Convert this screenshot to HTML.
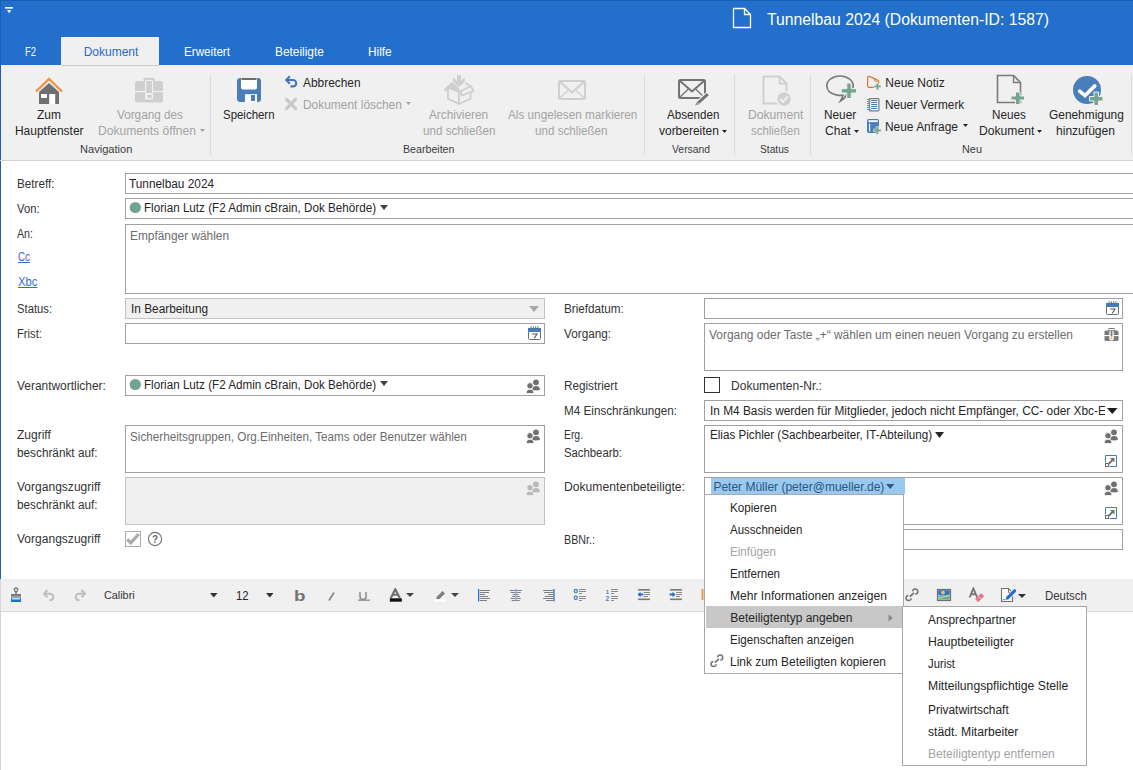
<!DOCTYPE html>
<html><head><meta charset="utf-8">
<style>
html,body{margin:0;padding:0;width:1133px;height:770px;overflow:hidden;background:#fff}
body{position:relative;font-family:"Liberation Sans",sans-serif}
.r{position:absolute;display:block}
.t{position:absolute;white-space:nowrap;transform-origin:0 0;font-family:"Liberation Sans",sans-serif}
</style></head><body>
<div class="r" style="left:0px;top:0px;width:1133px;height:65px;background:#226fcc"></div>
<div class="r" style="left:0px;top:0px;width:1133px;height:1px;background:#1b5fb5"></div>
<div class="r" style="left:0px;top:0px;width:1px;height:65px;background:#1b5fb5"></div>
<svg class="r" style="left:4px;top:6px" width="10" height="9" viewBox="0 0 10 9"><rect x="1" y="1" width="8" height="1.6" fill="#fff"/><path d="M3 4 H7.2 L5.1 7.3 Z" fill="#fff"/></svg>
<svg class="r" style="left:731px;top:7px" width="22" height="22" viewBox="0 0 22 22"><path d="M2.5 1.5 H13.5 L19.5 7.5 V20.5 H2.5 Z" fill="none" stroke="#fff" stroke-width="1.3"/><path d="M13.5 1.5 V7.5 H19.5" fill="none" stroke="#fff" stroke-width="1.3"/></svg>
<span class="t" style="left:767.00px;top:11.96px;font-size:16px;line-height:16px;color:#ffffff;transform:scaleX(0.9834);">Tunnelbau 2024 (Dokumenten-ID: 1587)</span>
<div class="r" style="left:61px;top:37px;width:98px;height:28px;background:#f0f0f0"></div>
<span class="t" style="left:25.00px;top:46.34px;font-size:12px;line-height:12px;color:#ffffff;transform:scaleX(0.7857);">F2</span>
<span class="t" style="left:83.70px;top:46.34px;font-size:12px;line-height:12px;color:#2a6ac4;">Dokument</span>
<span class="t" style="left:183.60px;top:46.34px;font-size:12px;line-height:12px;color:#ffffff;transform:scaleX(0.9714);">Erweitert</span>
<span class="t" style="left:274.70px;top:46.34px;font-size:12px;line-height:12px;color:#ffffff;transform:scaleX(0.9899);">Beteiligte</span>
<span class="t" style="left:368.20px;top:46.34px;font-size:12px;line-height:12px;color:#ffffff;transform:scaleX(0.9875);">Hilfe</span>
<div class="r" style="left:0px;top:65px;width:1133px;height:95px;background:#f0f0f0"></div>
<div class="r" style="left:0px;top:65px;width:1px;height:96px;background:#1b5fb5"></div>
<div class="r" style="left:0px;top:160px;width:1133px;height:1px;background:#d4d4d4"></div>
<div class="r" style="left:61px;top:65px;width:98px;height:1px;background:#cdcdcd"></div>
<div class="r" style="left:210px;top:74px;width:1px;height:81px;background:#dcdcdc"></div>
<div class="r" style="left:644px;top:74px;width:1px;height:81px;background:#dcdcdc"></div>
<div class="r" style="left:734px;top:74px;width:1px;height:81px;background:#dcdcdc"></div>
<div class="r" style="left:810px;top:74px;width:1px;height:81px;background:#dcdcdc"></div>
<div class="r" style="left:1131px;top:74px;width:1px;height:81px;background:#dcdcdc"></div>
<span class="t" style="left:36.80px;top:108.84px;font-size:12px;line-height:12px;color:#262626;transform:scaleX(0.9958);">Zum</span>
<span class="t" style="left:14.90px;top:124.84px;font-size:12px;line-height:12px;color:#262626;">Hauptfenster</span>
<span class="t" style="left:116.50px;top:108.84px;font-size:12px;line-height:12px;color:#a3a3a3;transform:scaleX(0.9778);">Vorgang des</span>
<span class="t" style="left:97.70px;top:124.84px;font-size:12px;line-height:12px;color:#a3a3a3;transform:scaleX(1.0077);">Dokuments öffnen</span>
<span class="t" style="left:79.60px;top:143.69px;font-size:11px;line-height:11px;color:#3c3c3c;transform:scaleX(1.0077);">Navigation</span>
<span class="t" style="left:223.00px;top:108.84px;font-size:12px;line-height:12px;color:#262626;transform:scaleX(0.9537);">Speichern</span>
<span class="t" style="left:303.00px;top:76.84px;font-size:12px;line-height:12px;color:#262626;transform:scaleX(0.9914);">Abbrechen</span>
<span class="t" style="left:303.00px;top:98.84px;font-size:12px;line-height:12px;color:#a3a3a3;transform:scaleX(0.9950);">Dokument löschen</span>
<span class="t" style="left:429.00px;top:108.84px;font-size:12px;line-height:12px;color:#a3a3a3;transform:scaleX(0.9833);">Archivieren</span>
<span class="t" style="left:422.70px;top:124.84px;font-size:12px;line-height:12px;color:#a3a3a3;transform:scaleX(0.9699);">und schließen</span>
<span class="t" style="left:507.50px;top:108.84px;font-size:12px;line-height:12px;color:#a3a3a3;transform:scaleX(0.9788);">Als ungelesen markieren</span>
<span class="t" style="left:535.40px;top:124.84px;font-size:12px;line-height:12px;color:#a3a3a3;transform:scaleX(0.9712);">und schließen</span>
<span class="t" style="left:403.00px;top:143.69px;font-size:11px;line-height:11px;color:#3c3c3c;transform:scaleX(0.9671);">Bearbeiten</span>
<span class="t" style="left:666.50px;top:108.84px;font-size:12px;line-height:12px;color:#262626;transform:scaleX(0.9685);">Absenden</span>
<span class="t" style="left:659.00px;top:124.84px;font-size:12px;line-height:12px;color:#262626;transform:scaleX(0.9967);">vorbereiten</span>
<span class="t" style="left:672.00px;top:143.69px;font-size:11px;line-height:11px;color:#3c3c3c;transform:scaleX(0.9441);">Versand</span>
<span class="t" style="left:747.60px;top:108.84px;font-size:12px;line-height:12px;color:#a3a3a3;transform:scaleX(1.0119);">Dokument</span>
<span class="t" style="left:750.60px;top:124.84px;font-size:12px;line-height:12px;color:#a3a3a3;transform:scaleX(0.9502);">schließen</span>
<span class="t" style="left:759.70px;top:143.69px;font-size:11px;line-height:11px;color:#3c3c3c;transform:scaleX(0.9280);">Status</span>
<span class="t" style="left:824.30px;top:108.84px;font-size:12px;line-height:12px;color:#262626;transform:scaleX(0.9832);">Neuer</span>
<span class="t" style="left:825.40px;top:124.84px;font-size:12px;line-height:12px;color:#262626;transform:scaleX(1.0059);">Chat</span>
<span class="t" style="left:885.30px;top:77.34px;font-size:12px;line-height:12px;color:#262626;">Neue Notiz</span>
<span class="t" style="left:885.30px;top:98.84px;font-size:12px;line-height:12px;color:#262626;transform:scaleX(0.9815);">Neuer Vermerk</span>
<span class="t" style="left:885.30px;top:120.84px;font-size:12px;line-height:12px;color:#262626;transform:scaleX(0.9932);">Neue Anfrage</span>
<span class="t" style="left:992.00px;top:108.84px;font-size:12px;line-height:12px;color:#262626;transform:scaleX(0.9727);">Neues</span>
<span class="t" style="left:978.60px;top:124.84px;font-size:12px;line-height:12px;color:#262626;transform:scaleX(1.0119);">Dokument</span>
<span class="t" style="left:1049.00px;top:108.84px;font-size:12px;line-height:12px;color:#262626;transform:scaleX(0.9921);">Genehmigung</span>
<span class="t" style="left:1056.40px;top:124.84px;font-size:12px;line-height:12px;color:#262626;transform:scaleX(1.0043);">hinzufügen</span>
<span class="t" style="left:962.40px;top:143.69px;font-size:11px;line-height:11px;color:#3c3c3c;transform:scaleX(0.9877);">Neu</span>
<svg class="r" style="left:200px;top:129px" width="5" height="3" viewBox="0 0 5 3"><path d="M0 0 H5 L2.5 3 Z" fill="#a3a3a3"/></svg>
<svg class="r" style="left:406px;top:102px" width="5" height="3" viewBox="0 0 5 3"><path d="M0 0 H5 L2.5 3 Z" fill="#a3a3a3"/></svg>
<svg class="r" style="left:722px;top:130px" width="5" height="3" viewBox="0 0 5 3"><path d="M0 0 H5 L2.5 3 Z" fill="#262626"/></svg>
<svg class="r" style="left:853.5px;top:130px" width="5" height="3" viewBox="0 0 5 3"><path d="M0 0 H5 L2.5 3 Z" fill="#262626"/></svg>
<svg class="r" style="left:963px;top:124px" width="5" height="3" viewBox="0 0 5 3"><path d="M0 0 H5 L2.5 3 Z" fill="#262626"/></svg>
<svg class="r" style="left:1037px;top:130px" width="5" height="3" viewBox="0 0 5 3"><path d="M0 0 H5 L2.5 3 Z" fill="#262626"/></svg>
<svg class="r" style="left:34px;top:77px" width="30" height="28" viewBox="0 0 30 28"><path d="M5 15 V27 H25 V15 L15 6 Z" fill="#6f6f6f"/><rect x="7" y="17" width="6" height="4" fill="#fff"/><rect x="15.2" y="17" width="6" height="10" fill="#fff"/><path d="M2 14.5 L15 2 L28 14.5" fill="none" stroke="#ee9544" stroke-width="2.4"/></svg>
<svg class="r" style="left:134px;top:77px" width="30" height="27" viewBox="0 0 30 27"><rect x="1" y="4" width="28" height="21.5" rx="2.5" fill="#cfcfcf"/><rect x="1" y="14" width="28" height="1.2" fill="#f0f0f0"/><rect x="9.3" y="0.8" width="11.6" height="3.2" rx="1.5" fill="#cfcfcf"/><rect x="11" y="3" width="8.1" height="19.6" rx="1.5" fill="#f0f0f0"/><rect x="12.3" y="4" width="5.6" height="12" fill="#cfcfcf"/><rect x="13.3" y="18" width="4.6" height="3" fill="#cfcfcf"/></svg>
<svg class="r" style="left:236px;top:77px" width="26" height="26" viewBox="0 0 26 26"><path d="M3.5 1 H22 A3 3 0 0 1 25 4 V22 A3 3 0 0 1 22 25 H3.5 A3 3 0 0 1 1 22 V4 A3 3 0 0 1 3.5 1 Z" fill="#4a7ebb"/><path d="M5 1 H21 V10.5 A2 2 0 0 1 19 12.5 H7 A2 2 0 0 1 5 10.5 Z" fill="#fff"/><rect x="5.5" y="1" width="15" height="2" fill="#6e6e6e"/><rect x="9" y="17.2" width="12" height="8" fill="#fff"/><rect x="15" y="18" width="4" height="6" fill="#4a7ebb"/></svg>
<svg class="r" style="left:284px;top:74px" width="15" height="15" viewBox="0 0 15 15"><path d="M2.5 6 H9 A3.2 3.2 0 0 1 9 12.4 H6.5" fill="none" stroke="#3b78c3" stroke-width="2.1"/><path d="M5.8 2.2 L2.2 6 L5.8 9.8" fill="none" stroke="#3b78c3" stroke-width="2.1"/></svg>
<svg class="r" style="left:284px;top:97px" width="14" height="14" viewBox="0 0 14 14"><path d="M2.5 2.5 L11.5 11.5 M11.5 2.5 L2.5 11.5" stroke="#c9c9c9" stroke-width="3.3" stroke-linecap="round"/></svg>
<svg class="r" style="left:440px;top:72px" width="38" height="36" viewBox="0 0 38 36"><path d="M17 3 H21 V9 L24.8 5 V9.5 L18.9 15.2 L13 9.5 V5 L17 9 Z" fill="#cfcfcf"/><path d="M4.6 18.6 L11.9 11.3 L18.9 17.6" fill="none" stroke="#cfcfcf" stroke-width="2.4" stroke-linejoin="round"/><path d="M7.5 16 L11.9 11.5 L18.9 17.6 V19.8 Z" fill="#cfcfcf"/><path d="M7.9 15.6 V26.6 L18.9 32 L30.6 26.6 V19.8" fill="none" stroke="#cfcfcf" stroke-width="1.9" stroke-linejoin="round"/><path d="M7.9 15.6 L18.9 19.8 V32" fill="none" stroke="#cfcfcf" stroke-width="1.9"/><path d="M18.9 19.8 L30.6 14.5" fill="none" stroke="#cfcfcf" stroke-width="1.9"/><path d="M25.2 11.2 L30.8 14 L33.4 19.2 L21.7 23.4 L20.1 19.6" fill="none" stroke="#cfcfcf" stroke-width="1.9" stroke-linejoin="round"/></svg>
<svg class="r" style="left:557px;top:79px" width="30" height="22" viewBox="0 0 30 22"><rect x="2" y="2" width="26" height="18" rx="1.5" fill="none" stroke="#cfcfcf" stroke-width="2"/><path d="M2.5 2.5 L15 13.5 L27.5 2.5" fill="none" stroke="#cfcfcf" stroke-width="2"/><path d="M3 19 L11.5 11 M27 19 L18.5 11" stroke="#cfcfcf" stroke-width="1.2"/></svg>
<svg class="r" style="left:677px;top:78px" width="34" height="28" viewBox="0 0 34 28"><rect x="2" y="2" width="26" height="18" rx="1.5" fill="none" stroke="#737373" stroke-width="2"/><path d="M2.5 2.5 L15 13.5 L27.5 2.5" fill="none" stroke="#737373" stroke-width="2"/><path d="M3 19 L11.5 11 M27 19 L18.5 11" stroke="#737373" stroke-width="1.2"/><path d="M31 16 L20.5 25.5" stroke="#f0f0f0" stroke-width="5.5"/><path d="M30.8 16.2 L21 25" stroke="#737373" stroke-width="3"/><path d="M19.6 24 L22 26.4 L18 27.5 Z" fill="#9a9a9a"/></svg>
<svg class="r" style="left:762px;top:75px" width="32" height="32" viewBox="0 0 32 32"><path d="M1.5 1.5 H17.5 L24.5 8.5 V28.5 H1.5 Z" fill="none" stroke="#d0d0d0" stroke-width="2"/><path d="M17.5 1.5 V8.5 H24.5" fill="none" stroke="#d0d0d0" stroke-width="1.8"/><circle cx="22" cy="24" r="7.5" fill="#d0d0d0" stroke="#f0f0f0" stroke-width="1.5"/><path d="M18.2 24 L21 26.8 L25.8 21.5" fill="none" stroke="#f0f0f0" stroke-width="2"/></svg>
<svg class="r" style="left:824px;top:74px" width="34" height="30" viewBox="0 0 34 30"><path d="M16 2 C8.5 2 2.8 6.3 2.8 11.8 C2.8 16.3 6.5 19.8 12 20.8 C14.5 21.3 17 21.5 19 21.3 C18.5 23.5 17.5 25.5 16.5 27 C19.5 25.5 21.5 23 22.5 20.8 C26.5 19.2 29.2 15.8 29.2 11.8 C29.2 6.3 23.5 2 16 2 Z" fill="none" stroke="#7a7a7a" stroke-width="1.7"/><path d="M22.8 9 H27.2 V14.7 H32.5 V19 H27.2 V24.5 H22.8 V19 H17.3 V14.7 H22.8 Z" fill="#72a68e" stroke="#f0f0f0" stroke-width="1"/></svg>
<svg class="r" style="left:865px;top:75px" width="18" height="16" viewBox="0 0 18 16"><path d="M9 12.3 H3.8 A1.2 1.2 0 0 1 2.6 11.1 V2.6 A1.4 1.4 0 0 1 4.4 1.4 L12.6 5 A1.6 1.6 0 0 1 13.6 6.5 V8" fill="none" stroke="#d4762c" stroke-width="1.2"/><path d="M8.6 3.2 L10.4 6.6 L13 5.6" fill="none" stroke="#d4762c" stroke-width="1"/><path d="M11.35 7.9 H13.65 V10.25 H16 V12.55 H13.65 V14.9 H11.35 V12.55 H9 V10.25 H11.35 Z" fill="#72a68e" stroke="#f0f0f0" stroke-width="0.5"/></svg>
<svg class="r" style="left:865px;top:97px" width="16" height="15" viewBox="0 0 16 15"><rect x="4.3" y="1.6" width="9.6" height="12.2" rx="0.8" fill="#fff" stroke="#7a7a7a" stroke-width="1.2"/><path d="M6.2 3.5 H12.2 M6.2 5.5 H12.2 M6.2 7.5 H12.2 M6.2 9.5 H12.2 M6.2 11.5 H12.2" stroke="#3b78c3" stroke-width="1"/><path d="M2 2.5 H5.5 M2 4.5 H5.5 M2 6.5 H5.5 M2 8.5 H5.5 M2 10.5 H5.5 M2 12.5 H5.5" stroke="#8a8a8a" stroke-width="1"/></svg>
<svg class="r" style="left:865px;top:118px" width="18" height="17" viewBox="0 0 18 17"><rect x="2" y="1" width="12" height="13.9" rx="1.6" fill="#4a7ebb"/><rect x="3.4" y="2.2" width="9.4" height="1.9" fill="#fbfbf5"/><rect x="4.1" y="5.5" width="1.1" height="8" fill="#fff"/><path d="M11.05 8.6 H13.55 V11.15 H16.1 V13.65 H13.55 V16.2 H11.05 V13.65 H8.5 V11.15 H11.05 Z" fill="#72a68e" stroke="#f0f0f0" stroke-width="0.6"/></svg>
<svg class="r" style="left:996px;top:74px" width="32" height="32" viewBox="0 0 32 32"><path d="M1.5 1.5 H17.5 L24.5 8.5 V28.5 H1.5 Z" fill="none" stroke="#7a7a7a" stroke-width="1.6"/><path d="M17.5 1.5 V8.5 H24.5" fill="none" stroke="#7a7a7a" stroke-width="1.4"/><path d="M19.5 18 H24 V22 H28.5 V26 H24 V30.5 H19.5 V26 H15 V22 H19.5 Z" fill="#72a68e" stroke="#f0f0f0" stroke-width="1"/></svg>
<svg class="r" style="left:1071px;top:74px" width="36" height="34" viewBox="0 0 36 34"><circle cx="16" cy="16" r="14" fill="#4a7ebb"/><path d="M8.6 17.2 L14 21.6 L23.8 11.9" fill="none" stroke="#fff" stroke-width="3.6" stroke-linecap="round"/><path d="M23 18 H27.5 V22.5 H32 V27 H27.5 V31.5 H23 V27 H18.5 V22.5 H23 Z" fill="#72a68e" stroke="#f0f0f0" stroke-width="1"/></svg>
<div class="r" style="left:0px;top:161px;width:1133px;height:418px;background:#ffffff"></div>
<div class="r" style="left:0px;top:161px;width:1px;height:418px;background:#1b5fb5"></div>
<div class="r" style="left:125px;top:173px;width:1030px;height:21px;background:#fff;border:1px solid #a0a0a0;box-sizing:border-box"></div>
<div class="r" style="left:125px;top:198px;width:1030px;height:21px;background:#fff;border:1px solid #a0a0a0;box-sizing:border-box"></div>
<div class="r" style="left:125px;top:224px;width:1030px;height:70px;background:#fff;border:1px solid #a0a0a0;box-sizing:border-box"></div>
<div class="r" style="left:125px;top:298px;width:420px;height:21px;background:#f0f0f0;border:1px solid #c2c2c2;box-sizing:border-box"></div>
<div class="r" style="left:125px;top:323px;width:420px;height:21px;background:#fff;border:1px solid #a0a0a0;box-sizing:border-box"></div>
<div class="r" style="left:125px;top:375px;width:420px;height:21px;background:#fff;border:1px solid #a0a0a0;box-sizing:border-box"></div>
<div class="r" style="left:125px;top:425px;width:420px;height:48px;background:#fff;border:1px solid #a0a0a0;box-sizing:border-box"></div>
<div class="r" style="left:125px;top:477px;width:420px;height:48px;background:#f0f0f0;border:1px solid #c2c2c2;box-sizing:border-box"></div>
<div class="r" style="left:704px;top:298px;width:419px;height:21px;background:#fff;border:1px solid #a0a0a0;box-sizing:border-box"></div>
<div class="r" style="left:704px;top:323px;width:419px;height:48px;background:#fff;border:1px solid #a0a0a0;box-sizing:border-box"></div>
<div class="r" style="left:704px;top:400px;width:419px;height:21px;background:#fff;border:1px solid #a0a0a0;box-sizing:border-box"></div>
<div class="r" style="left:704px;top:425px;width:419px;height:48px;background:#fff;border:1px solid #a0a0a0;box-sizing:border-box"></div>
<div class="r" style="left:704px;top:477px;width:419px;height:48px;background:#fff;border:1px solid #a0a0a0;box-sizing:border-box"></div>
<div class="r" style="left:704px;top:529px;width:419px;height:21px;background:#fff;border:1px solid #a0a0a0;box-sizing:border-box"></div>
<div class="r" style="left:704px;top:377px;width:16px;height:16px;border:1px solid #333;box-sizing:border-box;background:#fff"></div>
<div class="r" style="left:125px;top:531px;width:16px;height:16px;border:1px solid #adadad;box-sizing:border-box;background:#fff"></div>
<svg class="r" style="left:125px;top:531px" width="16" height="16" viewBox="0 0 16 16"><path d="M2.3 8.3 L5.8 11.8 L13.8 3" fill="none" stroke="#ababab" stroke-width="3.3"/></svg>
<svg class="r" style="left:147px;top:531px" width="16" height="16" viewBox="0 0 16 16"><circle cx="8" cy="8" r="6.6" fill="none" stroke="#707070" stroke-width="1.1"/><text x="8" y="12" font-family="Liberation Sans" font-weight="bold" font-size="10" text-anchor="middle" fill="#707070">?</text></svg>
<span class="t" style="left:17.00px;top:178.34px;font-size:12px;line-height:12px;color:#333333;transform:scaleX(0.9740);">Betreff:</span>
<span class="t" style="left:17.00px;top:202.84px;font-size:12px;line-height:12px;color:#333333;transform:scaleX(0.9375);">Von:</span>
<span class="t" style="left:17.00px;top:227.84px;font-size:12px;line-height:12px;color:#333333;transform:scaleX(0.8889);">An:</span>
<span class="t" style="left:17.00px;top:302.84px;font-size:12px;line-height:12px;color:#333333;transform:scaleX(0.9396);">Status:</span>
<span class="t" style="left:17.00px;top:327.84px;font-size:12px;line-height:12px;color:#333333;transform:scaleX(0.9346);">Frist:</span>
<span class="t" style="left:17.00px;top:380.34px;font-size:12px;line-height:12px;color:#333333;transform:scaleX(0.9944);">Verantwortlicher:</span>
<span class="t" style="left:17.00px;top:429.34px;font-size:12px;line-height:12px;color:#333333;">Zugriff</span>
<span class="t" style="left:17.00px;top:447.34px;font-size:12px;line-height:12px;color:#333333;transform:scaleX(0.9817);">beschränkt auf:</span>
<span class="t" style="left:17.00px;top:481.34px;font-size:12px;line-height:12px;color:#333333;transform:scaleX(1.0030);">Vorgangszugriff</span>
<span class="t" style="left:17.00px;top:499.34px;font-size:12px;line-height:12px;color:#333333;transform:scaleX(0.9817);">beschränkt auf:</span>
<span class="t" style="left:17.00px;top:532.84px;font-size:12px;line-height:12px;color:#333333;transform:scaleX(1.0030);">Vorgangszugriff</span>
<span class="t" style="left:564.20px;top:302.84px;font-size:12px;line-height:12px;color:#333333;transform:scaleX(0.9756);">Briefdatum:</span>
<span class="t" style="left:564.20px;top:327.84px;font-size:12px;line-height:12px;color:#333333;transform:scaleX(0.9792);">Vorgang:</span>
<span class="t" style="left:564.20px;top:380.34px;font-size:12px;line-height:12px;color:#333333;transform:scaleX(0.9772);">Registriert</span>
<span class="t" style="left:564.20px;top:404.84px;font-size:12px;line-height:12px;color:#333333;transform:scaleX(0.9741);">M4 Einschränkungen:</span>
<span class="t" style="left:564.20px;top:428.84px;font-size:12px;line-height:12px;color:#333333;transform:scaleX(0.8636);">Erg.</span>
<span class="t" style="left:564.20px;top:446.84px;font-size:12px;line-height:12px;color:#333333;transform:scaleX(0.9431);">Sachbearb:</span>
<span class="t" style="left:564.20px;top:481.34px;font-size:12px;line-height:12px;color:#333333;transform:scaleX(1.0126);">Dokumentenbeteiligte:</span>
<span class="t" style="left:564.20px;top:534.34px;font-size:12px;line-height:12px;color:#333333;transform:scaleX(0.8921);">BBNr.:</span>
<span class="t" style="left:18.00px;top:251.34px;font-size:12px;line-height:12px;color:#2f70c8;transform:scaleX(0.8136);text-decoration:underline">Cc</span>
<span class="t" style="left:18.00px;top:275.84px;font-size:12px;line-height:12px;color:#2f70c8;transform:scaleX(0.9398);text-decoration:underline">Xbc</span>
<span class="t" style="left:129.00px;top:178.34px;font-size:12px;line-height:12px;color:#262626;transform:scaleX(0.9855);">Tunnelbau 2024</span>
<svg class="r" style="left:129px;top:201px" width="13" height="13" viewBox="0 0 13 13"><circle cx="6.3" cy="6.5" r="5.6" fill="#71a38e"/></svg>
<span class="t" style="left:144.20px;top:201.84px;font-size:12px;line-height:12px;color:#262626;transform:scaleX(0.9717);">Florian Lutz (F2 Admin cBrain, Dok Behörde)</span>
<svg class="r" style="left:380px;top:205px" width="8" height="5" viewBox="0 0 8 5"><path d="M0 0 H8 L4.0 5 Z" fill="#404040"/></svg>
<span class="t" style="left:130.00px;top:229.84px;font-size:12px;line-height:12px;color:#6d6d6d;transform:scaleX(0.9900);">Empfänger wählen</span>
<span class="t" style="left:131.00px;top:302.84px;font-size:12px;line-height:12px;color:#262626;transform:scaleX(0.9872);">In Bearbeitung</span>
<svg class="r" style="left:529px;top:306px" width="10" height="7" viewBox="0 0 10 7"><path d="M0 0 H10 L5 6 Z" fill="#a8a8a8"/></svg>
<svg class="r" style="left:129px;top:378px" width="13" height="13" viewBox="0 0 13 13"><circle cx="6.3" cy="6.5" r="5.6" fill="#71a38e"/></svg>
<span class="t" style="left:144.20px;top:379.34px;font-size:12px;line-height:12px;color:#262626;transform:scaleX(0.9717);">Florian Lutz (F2 Admin cBrain, Dok Behörde)</span>
<svg class="r" style="left:380px;top:381px" width="8" height="5" viewBox="0 0 8 5"><path d="M0 0 H8 L4.0 5 Z" fill="#404040"/></svg>
<span class="t" style="left:130.00px;top:430.84px;font-size:12px;line-height:12px;color:#6d6d6d;transform:scaleX(0.9754);">Sicherheitsgruppen, Org.Einheiten, Teams oder Benutzer wählen</span>
<span class="t" style="left:709.30px;top:328.84px;font-size:12px;line-height:12px;color:#6d6d6d;transform:scaleX(0.9952);">Vorgang oder Taste „+“ wählen um einen neuen Vorgang zu erstellen</span>
<span class="t" style="left:731.40px;top:380.34px;font-size:12px;line-height:12px;color:#333333;transform:scaleX(1.0028);">Dokumenten-Nr.:</span>
<span class="t" style="left:710.30px;top:404.84px;font-size:12px;line-height:12px;color:#262626;transform:scaleX(0.9875);">In M4 Basis werden für Mitglieder, jedoch nicht Empfänger, CC- oder Xbc-Empfänger</span>
<div class="r" style="left:1104.5px;top:401px;width:17.5px;height:19px;background:#fff"></div>
<div class="r" style="left:1123px;top:398px;width:10px;height:25px;background:#fff"></div>
<div class="r" style="left:1122px;top:400px;width:1px;height:21px;background:#a0a0a0"></div>
<svg class="r" style="left:1107px;top:408px" width="11" height="7" viewBox="0 0 11 7"><path d="M0 0 H10.5 L5.25 6 Z" fill="#1a1a1a"/></svg>
<span class="t" style="left:710.30px;top:428.84px;font-size:12px;line-height:12px;color:#262626;transform:scaleX(0.9705);">Elias Pichler (Sachbearbeiter, IT-Abteilung)</span>
<svg class="r" style="left:935px;top:432px" width="9" height="6" viewBox="0 0 9 6"><path d="M0 0 H9 L4.5 6 Z" fill="#262626"/></svg>
<svg class="r" style="left:528px;top:325.7px" width="14" height="15" viewBox="0 0 14 15"><path d="M0.5 3 H12.5 V12.5 A1 1 0 0 1 11.5 13.5 H1.5 A1 1 0 0 1 0.5 12.5 Z" fill="#fff" stroke="#6e6e6e" stroke-width="1"/><rect x="0" y="2" width="13" height="4" fill="#3f7cc0"/><path d="M3 0.3 V3.3 M5.3 0.3 V3.3 M7.6 0.3 V3.3 M9.9 0.3 V3.3" stroke="#6e6e6e" stroke-width="1"/><path d="M4.3 8 H9 L6.3 12.3" fill="none" stroke="#555" stroke-width="1.1"/></svg>
<svg class="r" style="left:1106px;top:301px" width="14" height="15" viewBox="0 0 14 15"><path d="M0.5 3 H12.5 V12.5 A1 1 0 0 1 11.5 13.5 H1.5 A1 1 0 0 1 0.5 12.5 Z" fill="#fff" stroke="#6e6e6e" stroke-width="1"/><rect x="0" y="2" width="13" height="4" fill="#3f7cc0"/><path d="M3 0.3 V3.3 M5.3 0.3 V3.3 M7.6 0.3 V3.3 M9.9 0.3 V3.3" stroke="#6e6e6e" stroke-width="1"/><path d="M4.3 8 H9 L6.3 12.3" fill="none" stroke="#555" stroke-width="1.1"/></svg>
<svg class="r" style="left:526px;top:378.5px" width="16" height="16" viewBox="0 0 16 16"><circle cx="10" cy="3.3" r="2.9" fill="#707070"/><path d="M6.2 10.6 C6.2 8 7.8 7 10 7 C12.2 7 13.9 8 13.9 10.6 C13.9 11.2 12 11.4 10 11.4 C8 11.4 6.2 11.2 6.2 10.6 Z" fill="#707070"/><circle cx="4" cy="6.8" r="3.2" fill="#707070" stroke="#fff" stroke-width="0.9"/><path d="M0.2 13.8 C0.2 11.3 1.8 10.2 4 10.2 C6.2 10.2 7.9 11.3 7.9 13.8 C7.9 14.4 6 14.6 4 14.6 C2 14.6 0.2 14.4 0.2 13.8 Z" fill="#707070" stroke="#fff" stroke-width="0.9"/></svg>
<svg class="r" style="left:526px;top:428.5px" width="16" height="16" viewBox="0 0 16 16"><circle cx="10" cy="3.3" r="2.9" fill="#707070"/><path d="M6.2 10.6 C6.2 8 7.8 7 10 7 C12.2 7 13.9 8 13.9 10.6 C13.9 11.2 12 11.4 10 11.4 C8 11.4 6.2 11.2 6.2 10.6 Z" fill="#707070"/><circle cx="4" cy="6.8" r="3.2" fill="#707070" stroke="#fff" stroke-width="0.9"/><path d="M0.2 13.8 C0.2 11.3 1.8 10.2 4 10.2 C6.2 10.2 7.9 11.3 7.9 13.8 C7.9 14.4 6 14.6 4 14.6 C2 14.6 0.2 14.4 0.2 13.8 Z" fill="#707070" stroke="#fff" stroke-width="0.9"/></svg>
<svg class="r" style="left:526px;top:480.5px" width="16" height="16" viewBox="0 0 16 16"><circle cx="10" cy="3.3" r="2.9" fill="#b9b9b9"/><path d="M6.2 10.6 C6.2 8 7.8 7 10 7 C12.2 7 13.9 8 13.9 10.6 C13.9 11.2 12 11.4 10 11.4 C8 11.4 6.2 11.2 6.2 10.6 Z" fill="#b9b9b9"/><circle cx="4" cy="6.8" r="3.2" fill="#b9b9b9" stroke="#f0f0f0" stroke-width="0.9"/><path d="M0.2 13.8 C0.2 11.3 1.8 10.2 4 10.2 C6.2 10.2 7.9 11.3 7.9 13.8 C7.9 14.4 6 14.6 4 14.6 C2 14.6 0.2 14.4 0.2 13.8 Z" fill="#b9b9b9" stroke="#f0f0f0" stroke-width="0.9"/></svg>
<svg class="r" style="left:1104px;top:428.5px" width="16" height="16" viewBox="0 0 16 16"><circle cx="10" cy="3.3" r="2.9" fill="#707070"/><path d="M6.2 10.6 C6.2 8 7.8 7 10 7 C12.2 7 13.9 8 13.9 10.6 C13.9 11.2 12 11.4 10 11.4 C8 11.4 6.2 11.2 6.2 10.6 Z" fill="#707070"/><circle cx="4" cy="6.8" r="3.2" fill="#707070" stroke="#fff" stroke-width="0.9"/><path d="M0.2 13.8 C0.2 11.3 1.8 10.2 4 10.2 C6.2 10.2 7.9 11.3 7.9 13.8 C7.9 14.4 6 14.6 4 14.6 C2 14.6 0.2 14.4 0.2 13.8 Z" fill="#707070" stroke="#fff" stroke-width="0.9"/></svg>
<svg class="r" style="left:1104px;top:480.5px" width="16" height="16" viewBox="0 0 16 16"><circle cx="10" cy="3.3" r="2.9" fill="#707070"/><path d="M6.2 10.6 C6.2 8 7.8 7 10 7 C12.2 7 13.9 8 13.9 10.6 C13.9 11.2 12 11.4 10 11.4 C8 11.4 6.2 11.2 6.2 10.6 Z" fill="#707070"/><circle cx="4" cy="6.8" r="3.2" fill="#707070" stroke="#fff" stroke-width="0.9"/><path d="M0.2 13.8 C0.2 11.3 1.8 10.2 4 10.2 C6.2 10.2 7.9 11.3 7.9 13.8 C7.9 14.4 6 14.6 4 14.6 C2 14.6 0.2 14.4 0.2 13.8 Z" fill="#707070" stroke="#fff" stroke-width="0.9"/></svg>
<svg class="r" style="left:1105px;top:455px" width="13" height="13" viewBox="0 0 13 13"><path d="M0.5 7.5 V0.5 H11.5 V11.5 H4.5" fill="none" stroke="#3f7cc0" stroke-width="1"/><path d="M3 9.5 L8 4.5" stroke="#6e6e6e" stroke-width="1.8"/><path d="M5 3 H9.5 V7.5 Z" fill="#6e6e6e"/><rect x="0.5" y="8.5" width="3" height="3" fill="#fff" stroke="#6e6e6e" stroke-width="1"/></svg>
<svg class="r" style="left:1105px;top:507px" width="13" height="13" viewBox="0 0 13 13"><path d="M0.5 7.5 V0.5 H11.5 V11.5 H4.5" fill="none" stroke="#3f7cc0" stroke-width="1"/><path d="M3 9.5 L8 4.5" stroke="#6e6e6e" stroke-width="1.8"/><path d="M5 3 H9.5 V7.5 Z" fill="#6e6e6e"/><rect x="0.5" y="8.5" width="3" height="3" fill="#fff" stroke="#6e6e6e" stroke-width="1"/></svg>
<svg class="r" style="left:1103.5px;top:327.5px" width="15" height="14" viewBox="0 0 15 14"><rect x="0.5" y="2.5" width="14" height="10.5" rx="1.5" fill="#7a7a7a"/><rect x="5" y="0.5" width="5" height="2" fill="none" stroke="#7a7a7a" stroke-width="1"/><rect x="0" y="7" width="15" height="1.1" fill="#fff"/><rect x="5.3" y="2.5" width="4.4" height="10" rx="1.5" fill="#fff"/><rect x="6.6" y="2.5" width="1.8" height="6" fill="#7a7a7a"/><rect x="6.6" y="9.5" width="1.8" height="1.8" fill="#e8a93a"/></svg>
<div class="r" style="left:711px;top:478px;width:194px;height:16px;background:#99c9ef"></div>
<span class="t" style="left:713.40px;top:480.84px;font-size:12px;line-height:12px;color:#2b5580;">Peter Müller (peter@mueller.de)</span>
<svg class="r" style="left:885.7px;top:484px" width="8.4" height="5" viewBox="0 0 8.4 5"><path d="M0 0 H8.4 L4.2 5 Z" fill="#2e5a84"/></svg>
<div class="r" style="left:0px;top:579px;width:1133px;height:33px;background:#f0f0f0"></div>
<div class="r" style="left:0px;top:611px;width:1133px;height:1px;background:#d8d8d8"></div>
<div class="r" style="left:0px;top:612px;width:1133px;height:158px;background:#fff"></div>
<div class="r" style="left:0px;top:579px;width:1px;height:191px;background:#d5d5d5"></div>
<span class="t" style="left:104.20px;top:590.19px;font-size:11px;line-height:11px;color:#333;transform:scaleX(0.9824);">Calibri</span>
<span class="t" style="left:236.40px;top:590.14px;font-size:12px;line-height:12px;color:#262626;transform:scaleX(0.9434);">12</span>
<svg class="r" style="left:210.3px;top:593.2px" width="7.6" height="4.4" viewBox="0 0 7.6 4.4"><path d="M0 0 H7.6 L3.8 4.4 Z" fill="#333"/></svg>
<svg class="r" style="left:265.8px;top:593.2px" width="7.6" height="4.4" viewBox="0 0 7.6 4.4"><path d="M0 0 H7.6 L3.8 4.4 Z" fill="#333"/></svg>
<span class="t" style="left:1044.80px;top:590.34px;font-size:12px;line-height:12px;color:#3a3a3a;transform:scaleX(0.9500);">Deutsch</span>
<svg class="r" style="left:10px;top:587px" width="12" height="16" viewBox="0 0 12 16"><circle cx="6" cy="2.8" r="1.8" fill="none" stroke="#7a7a7a" stroke-width="1.3"/><rect x="5.2" y="4.3" width="1.6" height="3" fill="#7a7a7a"/><rect x="1" y="7" width="10" height="2" fill="#7a7a7a"/><rect x="1" y="9" width="10" height="1.5" fill="#a8a8a8"/><rect x="1" y="10.5" width="10" height="4.5" fill="#1f6fd0"/><path d="M2 11 L3 12.5 L4 11 L5 12.5 L6 11 L7 12.5 L8 11 L9 12.5 L10 11" fill="none" stroke="#fff" stroke-width="0.9"/></svg>
<svg class="r" style="left:41.5px;top:589px" width="14" height="13" viewBox="0 0 14 13"><path d="M2 4.7 H8 A3.3 3.3 0 0 1 8 11.3 H7.5" fill="none" stroke="#bdbdbd" stroke-width="2"/><path d="M5.5 1 L2 4.7 L5.5 8.4" fill="none" stroke="#bdbdbd" stroke-width="2"/></svg>
<svg class="r" style="left:72.5px;top:589px" width="14" height="13" viewBox="0 0 14 13"><path d="M12 4.7 H6 A3.3 3.3 0 0 0 6 11.3 H6.5" fill="none" stroke="#bdbdbd" stroke-width="2"/><path d="M8.5 1 L12 4.7 L8.5 8.4" fill="none" stroke="#bdbdbd" stroke-width="2"/></svg>
<span class="t" style="left:293.80px;top:588.30px;font-size:15px;line-height:15px;color:#747474;transform:scaleX(1.2485);font-weight:bold">b</span>
<svg class="r" style="left:326px;top:591px" width="11" height="11" viewBox="0 0 11 11"><path d="M8 1.5 L3 9.5" stroke="#8a8a8a" stroke-width="1.8"/></svg>
<svg class="r" style="left:357px;top:591px" width="14" height="11" viewBox="0 0 14 11"><path d="M3 1 V5.5 A3 3 0 0 0 9 5.5 V1" fill="none" stroke="#8a8a8a" stroke-width="1.5"/><rect x="1" y="8.5" width="12" height="1.3" fill="#8a8a8a"/></svg>
<svg class="r" style="left:389px;top:588px" width="14" height="14" viewBox="0 0 14 14"><path d="M1.8 10 L6.3 1.2 L10.8 10 M3.8 6.8 H8.8" fill="none" stroke="#6e6e6e" stroke-width="2.1"/><rect x="0.8" y="10.3" width="12" height="3.4" fill="#111"/></svg>
<svg class="r" style="left:406px;top:593px" width="8" height="4" viewBox="0 0 8 4"><path d="M0 0 H8 L4.0 4 Z" fill="#444"/></svg>
<svg class="r" style="left:433px;top:588px" width="14" height="14" viewBox="0 0 14 14"><path d="M4 8.5 L9.5 3 L12 5.5 L6.5 11 L3 11.5 Z" fill="#808080"/><rect x="1.5" y="11.3" width="11" height="2.5" fill="#fff"/></svg>
<svg class="r" style="left:450.5px;top:593px" width="8" height="4" viewBox="0 0 8 4"><path d="M0 0 H8 L4.0 4 Z" fill="#444"/></svg>
<svg class="r" style="left:478px;top:588px" width="15" height="15" viewBox="0 0 15 15"><rect x="2" y="2" width="10" height="1" fill="#808080"/><rect x="2" y="4" width="9" height="1" fill="#808080"/><rect x="2" y="6" width="5" height="1" fill="#808080"/><rect x="2" y="8" width="8" height="1" fill="#808080"/><rect x="2" y="10" width="10" height="1" fill="#808080"/><rect x="2" y="12" width="7" height="1" fill="#808080"/><rect x="0" y="1" width="1.3" height="12.5" fill="#2a6fd0"/></svg>
<svg class="r" style="left:508.7px;top:588px" width="15" height="15" viewBox="0 0 15 15"><rect x="0.7000000000000002" y="2" width="12" height="1" fill="#808080"/><rect x="1.7000000000000002" y="4" width="10" height="1" fill="#808080"/><rect x="3.7" y="6" width="6" height="1" fill="#808080"/><rect x="2.7" y="8" width="8" height="1" fill="#808080"/><rect x="1.7000000000000002" y="10" width="10" height="1" fill="#808080"/><rect x="2.7" y="12" width="8" height="1" fill="#808080"/><rect x="6" y="1" width="1.4" height="12.5" fill="#8ab4e4"/></svg>
<svg class="r" style="left:539.6px;top:588px" width="15" height="15" viewBox="0 0 15 15"><rect x="3" y="2" width="10" height="1" fill="#808080"/><rect x="4" y="4" width="9" height="1" fill="#808080"/><rect x="8" y="6" width="5" height="1" fill="#808080"/><rect x="5" y="8" width="8" height="1" fill="#808080"/><rect x="3" y="10" width="10" height="1" fill="#808080"/><rect x="6" y="12" width="7" height="1" fill="#808080"/><rect x="13.3" y="1" width="1.3" height="12.5" fill="#2a6fd0"/></svg>
<svg class="r" style="left:573px;top:588px" width="14" height="14" viewBox="0 0 14 14"><circle cx="2.8" cy="2.9" r="1.6" fill="none" stroke="#3f7cc0" stroke-width="1.2"/><circle cx="2.8" cy="9.8" r="1.6" fill="none" stroke="#3f7cc0" stroke-width="1.2"/><path d="M6 1.5 H13 M6 3.5 H13 M6 5.5 H9 M6 8.5 H13 M6 10.5 H13 M6 12.5 H9" stroke="#8a8a8a" stroke-width="1"/></svg>
<svg class="r" style="left:605px;top:588px" width="14" height="14" viewBox="0 0 14 14"><text x="0.8" y="5.5" font-family="Liberation Sans" font-weight="bold" font-size="6" fill="#3f7cc0">1</text><text x="0.5" y="12.5" font-family="Liberation Sans" font-weight="bold" font-size="6.5" fill="#3f7cc0">2</text><path d="M6 1.5 H13 M6 3.5 H13 M6 5.5 H9 M6 8.5 H13 M6 10.5 H13 M6 12.5 H9" stroke="#8a8a8a" stroke-width="1"/></svg>
<svg class="r" style="left:637px;top:588px" width="14" height="14" viewBox="0 0 14 14"><rect x="1" y="1" width="12" height="1.6" fill="#7a7a7a"/><rect x="1" y="10.5" width="12" height="1.6" fill="#7a7a7a"/><path d="M6.5 4.5 H13 M6.5 6.5 H13 M6.5 8.5 H11" stroke="#8a8a8a" stroke-width="1"/><path d="M0.5 6.5 L3.5 3.8 V5.4 H6 V7.6 H3.5 V9.2 Z" fill="#1f6fd0"/></svg>
<svg class="r" style="left:669px;top:588px" width="14" height="14" viewBox="0 0 14 14"><rect x="1" y="1" width="12" height="1.6" fill="#7a7a7a"/><rect x="1" y="10.5" width="12" height="1.6" fill="#7a7a7a"/><path d="M7 4.5 H13 M7 6.5 H13 M7 8.5 H11" stroke="#8a8a8a" stroke-width="1"/><path d="M6.5 6.5 L3.5 3.8 V5.4 H0.5 V7.6 H3.5 V9.2 Z" fill="#1f6fd0"/></svg>
<svg class="r" style="left:701px;top:588px" width="4" height="14" viewBox="0 0 4 14"><rect x="0.5" y="1" width="2" height="11" fill="#e0a050"/></svg>
<svg class="r" style="left:903px;top:585px" width="20" height="20" viewBox="0 0 20 20"><path d="M8.19 13.27 A2.6 2.6 0 1 1 5.42 10.41" fill="none" stroke="#767676" stroke-width="1.5"/><path d="M9.61 6.33 A2.6 2.6 0 1 1 12.38 9.19" fill="none" stroke="#767676" stroke-width="1.5"/><path d="M6.9 11.7 L10.9 7.9" stroke="#767676" stroke-width="1.8"/></svg>
<svg class="r" style="left:936px;top:588px" width="16" height="14" viewBox="0 0 16 14"><rect x="1.5" y="1.5" width="13" height="11" fill="#fff" stroke="#6e6e6e" stroke-width="1.2"/><rect x="2.2" y="2.2" width="11.6" height="5.3" fill="#2f74cc"/><circle cx="7" cy="4.6" r="1.9" fill="#f1c465"/><path d="M2.2 8.3 L13.8 6.2 V11.8 H2.2 Z" fill="#6aa88c"/><path d="M2.2 10.3 L13.8 7.4" stroke="#dfeee6" stroke-width="0.8"/></svg>
<svg class="r" style="left:968px;top:587px" width="18" height="17" viewBox="0 0 18 17"><path d="M1.6 10.5 L5.4 1.5 L9.2 10.5 M3.2 7.3 H7.6" fill="none" stroke="#767676" stroke-width="1.9"/><path d="M8.6 13.6 L14.6 7.6" stroke="#e8798d" stroke-width="4.4"/><path d="M10.4 9.4 L12.8 11.8" stroke="#f0f0f0" stroke-width="0.8"/></svg>
<svg class="r" style="left:1000px;top:587px" width="17" height="16" viewBox="0 0 17 16"><path d="M1.5 1.5 H8.5 L12.5 5.5 V14.5 H1.5 Z" fill="#fff" stroke="#707070" stroke-width="1.1"/><path d="M8.5 1.5 V5.5 H12.5" fill="none" stroke="#707070" stroke-width="0.9"/><path d="M14.6 3.8 L7.6 10.8" stroke="#f0f0f0" stroke-width="4.6"/><path d="M14.6 3.8 L7.6 10.8" stroke="#2a6fd0" stroke-width="3.2" stroke-linecap="round"/><path d="M6.3 10.6 L7.8 12.1 L5.4 12.9 Z" fill="#2a6fd0"/><path d="M2.8 13.2 L4 12.3 L5 13" fill="none" stroke="#2a6fd0" stroke-width="0.9"/></svg>
<svg class="r" style="left:1018px;top:593.5px" width="8" height="4" viewBox="0 0 8 4"><path d="M0 0 H8 L4.0 4 Z" fill="#333"/></svg>
<div class="r" style="left:704px;top:494px;width:200px;height:180px;background:#fff;border:1px solid #a7a9ae;box-sizing:border-box"></div>
<div class="r" style="left:706px;top:606px;width:196px;height:22px;background:#c8c8c8"></div>
<span class="t" style="left:730.30px;top:501.54px;font-size:12px;line-height:12px;color:#262626;transform:scaleX(0.9729);">Kopieren</span>
<span class="t" style="left:730.30px;top:523.54px;font-size:12px;line-height:12px;color:#262626;transform:scaleX(0.9603);">Ausschneiden</span>
<span class="t" style="left:730.30px;top:546.34px;font-size:12px;line-height:12px;color:#a3a3a3;transform:scaleX(0.9684);">Einfügen</span>
<span class="t" style="left:730.30px;top:567.64px;font-size:12px;line-height:12px;color:#262626;transform:scaleX(0.9615);">Entfernen</span>
<span class="t" style="left:730.30px;top:589.54px;font-size:12px;line-height:12px;color:#262626;transform:scaleX(1.0048);">Mehr Informationen anzeigen</span>
<span class="t" style="left:730.30px;top:612.34px;font-size:12px;line-height:12px;color:#262626;">Beteiligtentyp angeben</span>
<span class="t" style="left:730.30px;top:634.24px;font-size:12px;line-height:12px;color:#262626;transform:scaleX(0.9669);">Eigenschaften anzeigen</span>
<span class="t" style="left:730.30px;top:656.14px;font-size:12px;line-height:12px;color:#262626;transform:scaleX(0.9952);">Link zum Beteiligten kopieren</span>
<svg class="r" style="left:708px;top:651px" width="20" height="20" viewBox="0 0 20 20"><path d="M8.19 13.27 A2.6 2.6 0 1 1 5.42 10.41" fill="none" stroke="#767676" stroke-width="1.5"/><path d="M9.61 6.33 A2.6 2.6 0 1 1 12.38 9.19" fill="none" stroke="#767676" stroke-width="1.5"/><path d="M6.9 11.7 L10.9 7.9" stroke="#767676" stroke-width="1.8"/></svg>
<svg class="r" style="left:888px;top:614px" width="6" height="8" viewBox="0 0 6 8"><path d="M0.5 0.5 L5 4 L0.5 7.5 Z" fill="#8a8a8a"/></svg>
<div class="r" style="left:902px;top:606px;width:185px;height:160px;background:#fff;border:1px solid #a7a9ae;box-sizing:border-box"></div>
<span class="t" style="left:928.10px;top:613.84px;font-size:12px;line-height:12px;color:#262626;transform:scaleX(0.9915);">Ansprechpartner</span>
<span class="t" style="left:928.10px;top:635.84px;font-size:12px;line-height:12px;color:#262626;transform:scaleX(1.0238);">Hauptbeteiligter</span>
<span class="t" style="left:928.10px;top:658.34px;font-size:12px;line-height:12px;color:#262626;transform:scaleX(0.9391);">Jurist</span>
<span class="t" style="left:928.10px;top:680.04px;font-size:12px;line-height:12px;color:#262626;transform:scaleX(1.0159);">Mitteilungspflichtige Stelle</span>
<span class="t" style="left:928.10px;top:703.54px;font-size:12px;line-height:12px;color:#262626;transform:scaleX(0.9920);">Privatwirtschaft</span>
<span class="t" style="left:928.10px;top:726.04px;font-size:12px;line-height:12px;color:#262626;transform:scaleX(1.0112);">städt. Mitarbeiter</span>
<span class="t" style="left:928.10px;top:748.14px;font-size:12px;line-height:12px;color:#a3a3a3;transform:scaleX(1.0059);">Beteiligtentyp entfernen</span>
</body></html>
